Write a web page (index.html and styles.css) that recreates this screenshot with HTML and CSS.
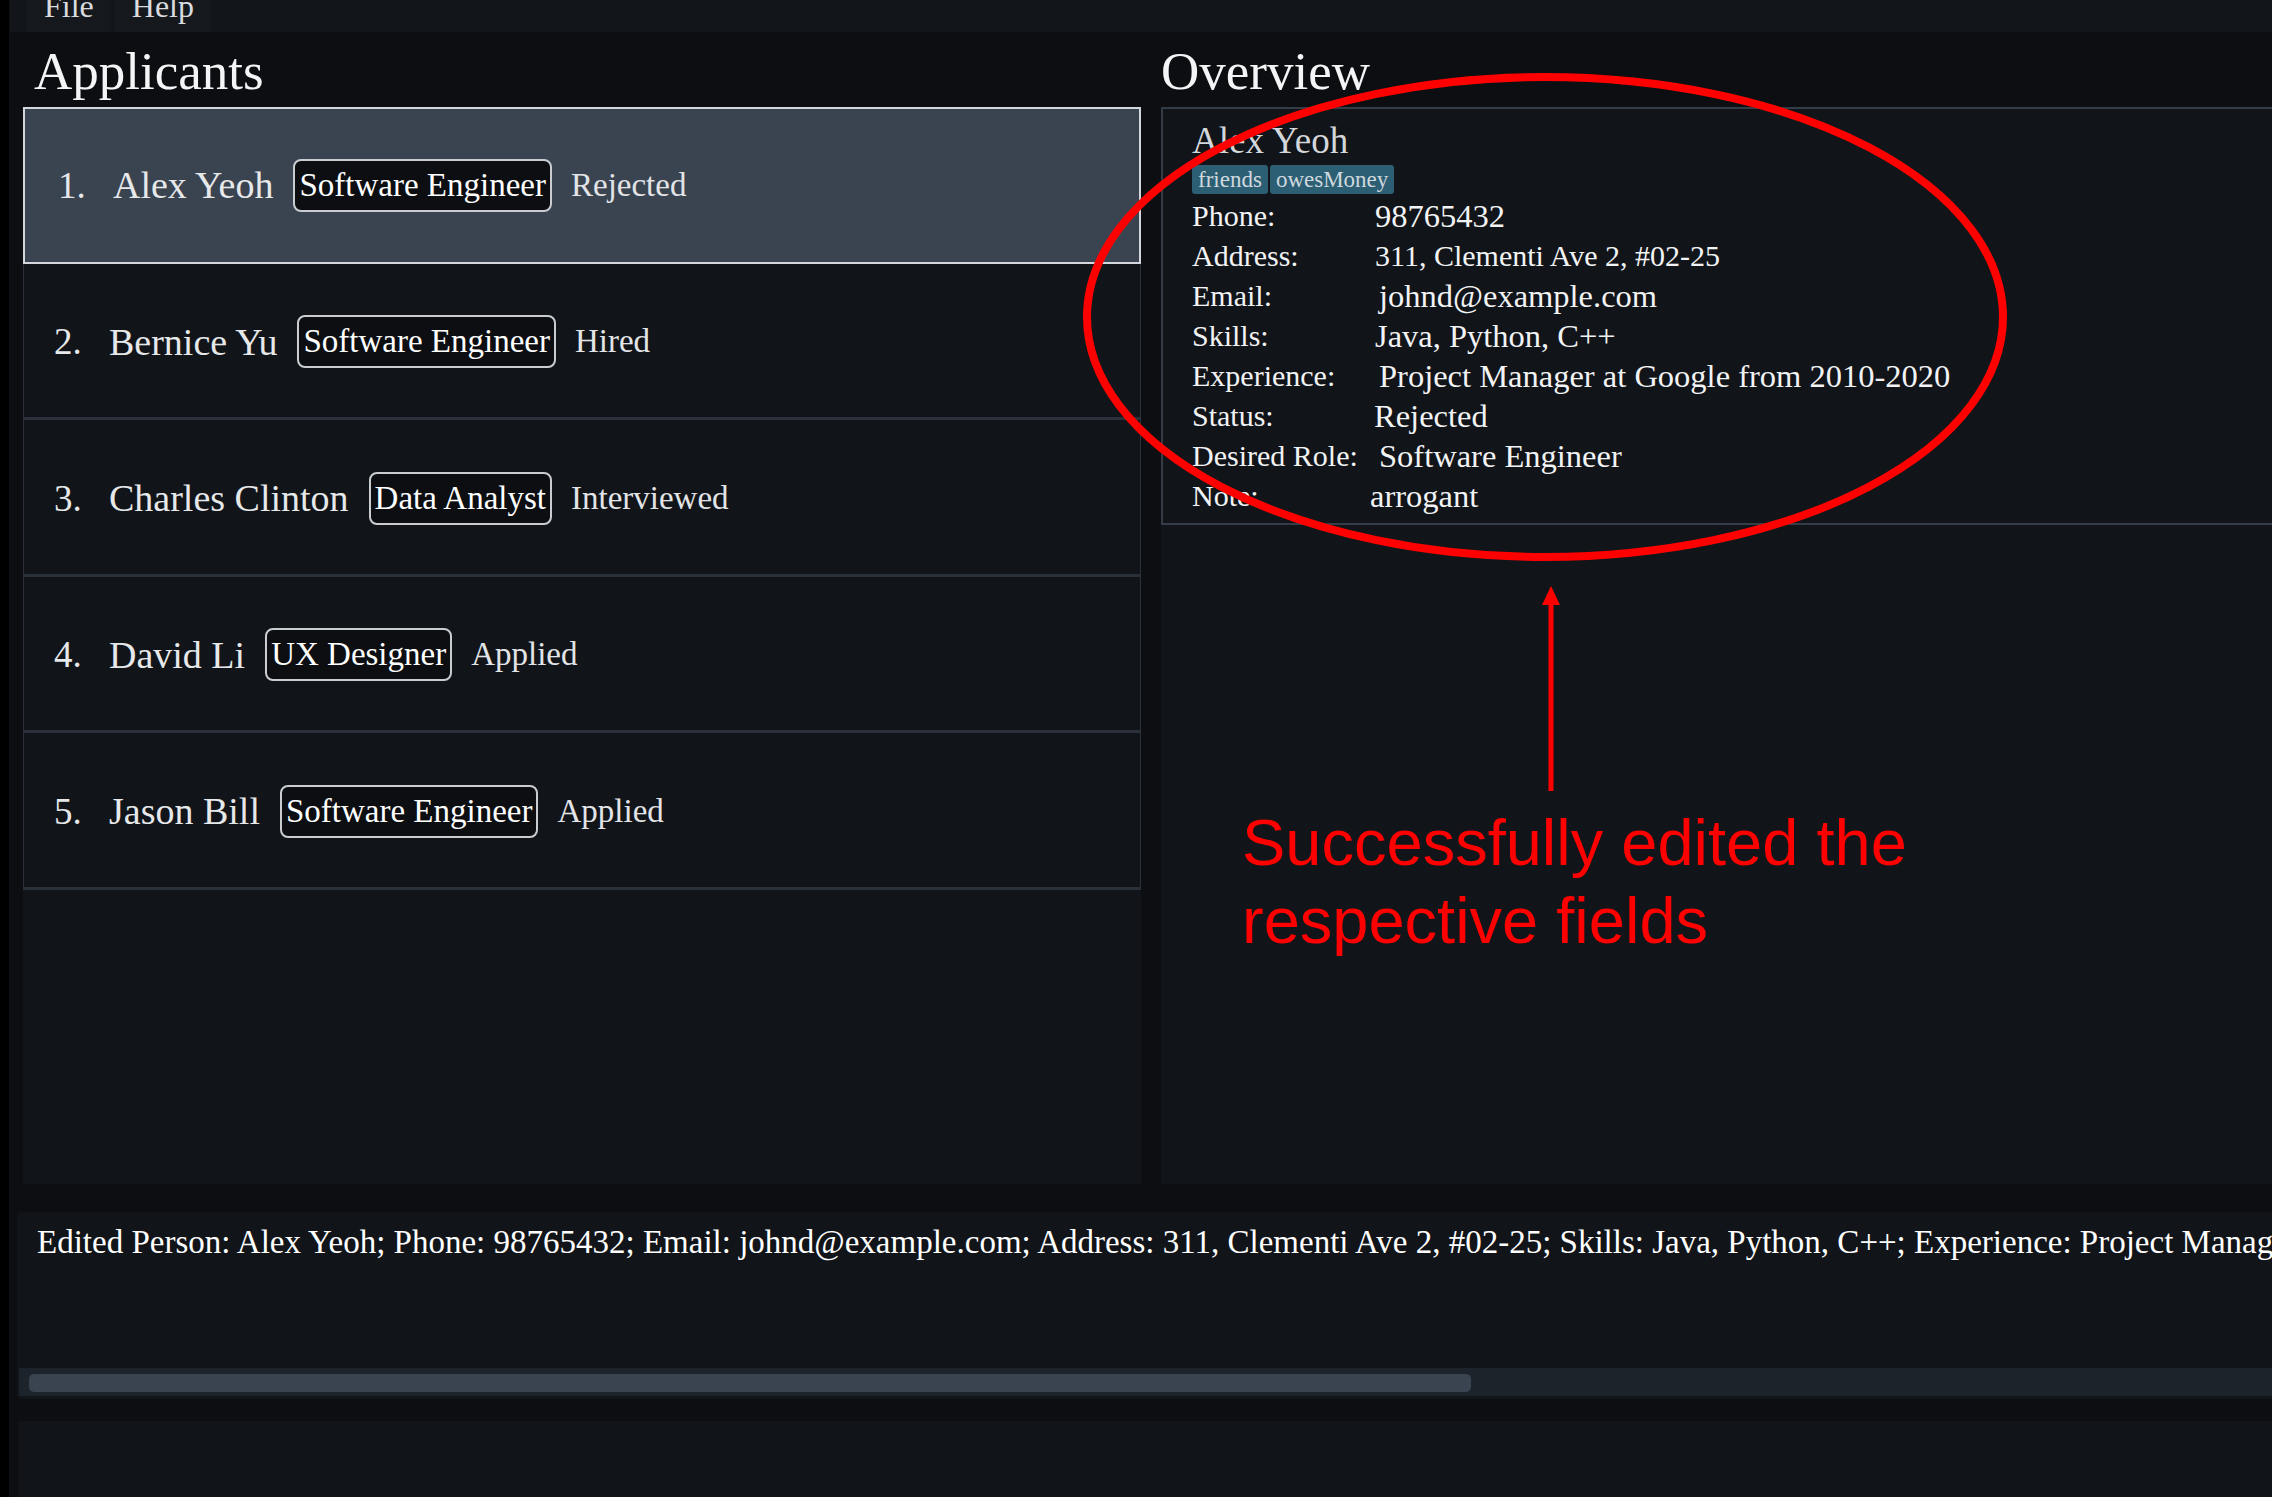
FILE: index.html
```html
<!DOCTYPE html>
<html lang="en">
<head>
<meta charset="utf-8">
<title>Applicants</title>
<link rel="stylesheet" href="styles.css">
</head>
<body>
<div class="edge"></div>
<div class="app">
  <nav class="menubar">
    <span class="menu-item">File</span>
    <span class="menu-item">Help</span>
  </nav>
  <main class="main">
    <section class="col col-list">
      <h1 class="heading">Applicants</h1>
      <div class="panel list">
        <div class="cell selected"><span class="idx">1.</span><span class="name">Alex Yeoh</span><span class="role">Software Engineer</span><span class="status">Rejected</span></div>
        <div class="cell"><span class="idx">2.</span><span class="name">Bernice Yu</span><span class="role">Software Engineer</span><span class="status">Hired</span></div>
        <div class="cell"><span class="idx">3.</span><span class="name">Charles Clinton</span><span class="role">Data Analyst</span><span class="status">Interviewed</span></div>
        <div class="cell"><span class="idx">4.</span><span class="name">David Li</span><span class="role">UX Designer</span><span class="status">Applied</span></div>
        <div class="cell"><span class="idx">5.</span><span class="name">Jason Bill</span><span class="role">Software Engineer</span><span class="status">Applied</span></div>
      </div>
    </section>
    <section class="col col-overview">
      <h1 class="heading heading-overview">Overview</h1>
      <div class="panel overview">
        <div class="card">
          <div class="card-name">Alex Yeoh</div>
          <div class="tags"><span class="tag">friends</span><span class="tag">owesMoney</span></div>
          <dl class="details">
            <dt>Phone:</dt><dd>98765432</dd>
            <dt>Address:</dt><dd class="narrow">311, Clementi Ave 2, #02-25</dd>
            <dt>Email:</dt><dd class="shift-r">johnd@example.com</dd>
            <dt>Skills:</dt><dd>Java, Python, C++</dd>
            <dt>Experience:</dt><dd class="shift-r">Project Manager at Google from 2010-2020</dd>
            <dt>Status:</dt><dd class="shift-l1">Rejected</dd>
            <dt>Desired Role:</dt><dd class="shift-r">Software Engineer</dd>
            <dt>Note:</dt><dd class="shift-l">arrogant</dd>
          </dl>
        </div>
      </div>
    </section>
  </main>
  <div class="result">
    <div class="result-text">Edited Person: Alex Yeoh; Phone: 98765432; Email: johnd@example.com; Address: 311, Clementi Ave 2, #02-25; Skills: Java, Python, C++; Experience: Project Manager at Google from 2010-2020; Status: Rejected; Note: arrogant; Desired Role: Software Engineer; Tags: [friends][owesMoney]</div>
    <div class="scrollbar"><div class="thumb"></div></div>
  </div>
  <div class="statusbar"></div>
</div>

<svg class="annotation" width="2272" height="1497" viewBox="0 0 2272 1497" aria-hidden="true">
  <ellipse cx="1545" cy="317" rx="458" ry="240" fill="none" stroke="#ff0000" stroke-width="8"/>
  <line x1="1551" y1="600" x2="1551" y2="791" stroke="#ff0000" stroke-width="5"/>
  <polygon points="1551,586 1542,605 1560,605" fill="#ff0000"/>
</svg>
<div class="annotation-text">Successfully edited the<br>respective fields</div>
</body>
</html>
```

FILE: styles.css
```css
html, body {
  margin: 0;
  padding: 0;
}

body {
  position: relative;
  width: 2272px;
  height: 1497px;
  overflow: hidden;
  display: flex;
  background: #0c0e12;
  font-family: "Liberation Serif", "DejaVu Serif", serif;
  color: #eceef0;
}

.edge {
  flex: none;
  width: 9px;
  background: #000000;
}

.app {
  flex: 1;
  min-width: 0;
  display: flex;
  flex-direction: column;
}

/* ---------- menu bar ---------- */
.menubar {
  flex: none;
  height: 32px;
  margin-left: 1px;
  padding-left: 17px;
  display: flex;
  gap: 4px;
  background: #12151a;
  overflow: hidden;
}

.menu-item {
  height: 32px;
  padding: 0 17px;
  font-size: 32px;
  line-height: 12px;
  color: #d9dbde;
  background: #15191e;
}

/* ---------- main columns ---------- */
.main {
  flex: none;
  height: 1152px;
  padding-left: 14px;
  display: flex;
  gap: 20px;
}

.col {
  display: flex;
  flex-direction: column;
}

.col-list {
  flex: none;
  width: 1118px;
}

.col-overview {
  flex: 1;
  min-width: 0;
}

.heading {
  flex: none;
  box-sizing: border-box;
  height: 75px;
  margin: 0;
  padding: 3px 0 0 11px;
  font-size: 53px;
  line-height: 72px;
  font-weight: normal;
  color: #f4f5f6;
}

.heading-overview {
  padding-left: 0;
}

.panel {
  flex: 1;
  background: #111419;
}

/* ---------- applicant list ---------- */
.list {
  display: flex;
  flex-direction: column;
}

.cell {
  flex: none;
  box-sizing: border-box;
  height: 156.5px;
  display: flex;
  align-items: center;
  padding: 3px 0 0 30px;
  border: 1px solid #2a313b;
  border-top: none;
  border-bottom-width: 3px;
  color: #e6e8ea;
}

.cell.selected {
  background: #3a4350;
  border: 2px solid #d3d7dc;
  padding: 0 0 0 33px;
}

.idx {
  width: 55px;
  font-size: 37px;
}

.name {
  font-size: 38px;
  margin-right: 20px;
}

.role {
  font-size: 33px;
  line-height: 45px;
  padding: 2px 4px;
  border: 2px solid #c9cdd2;
  border-radius: 8px;
  background: #0c0e12;
  color: #ffffff;
  margin-right: 19px;
}

.status {
  font-size: 33px;
  color: #e2e4e7;
}

/* ---------- overview card ---------- */
.card {
  border: 2px solid #343c47;
  border-right: none;
  padding: 11px 0 7px 29px;
}

.card-name {
  font-size: 37px;
  line-height: 41px;
  color: #d3d7db;
}

.tags {
  margin-top: 4px;
  display: flex;
  gap: 2px;
}

.tag {
  font-size: 23px;
  line-height: 29px;
  padding: 0 6px;
  border-radius: 3px;
  background: #2c5f74;
  color: #cfd8de;
}

.details {
  margin: 2px 0 0;
  display: grid;
  grid-template-columns: 183px auto;
  font-size: 30px;
  line-height: 40px;
  color: #f2f3f4;
}

.details dt,
.details dd {
  margin: 0;
}

.details dd {
  font-size: 32.5px;
}

.details dd.narrow {
  font-size: 30px;
}

.details .shift-r {
  padding-left: 4px;
}

.details .shift-l1 {
  margin-left: -1px;
}

.details .shift-l {
  margin-left: -5px;
}

/* ---------- result display ---------- */
.result {
  flex: none;
  height: 187px;
  margin: 28px 0 0 8px;
  display: flex;
  flex-direction: column;
  background: #111418;
  border-radius: 5px 0 0 5px;
  overflow: hidden;
}

.result-text {
  flex: 1;
  padding: 10px 0 0 20px;
  font-size: 33px;
  line-height: 40px;
  white-space: nowrap;
  overflow: hidden;
  color: #ffffff;
}

.scrollbar {
  flex: none;
  box-sizing: border-box;
  height: 28px;
  margin: 0 0 3px 2px;
  padding: 6px 0 0 10px;
  background: #1d232b;
}

.thumb {
  width: 1442px;
  height: 18px;
  border-radius: 5px;
  background: #3a4350;
}

.statusbar {
  flex: 1;
  margin: 22px 0 0 10px;
  background: #111418;
}

/* ---------- annotation overlay ---------- */
.annotation {
  position: absolute;
  left: 0;
  top: 0;
  pointer-events: none;
}

.annotation-text {
  position: absolute;
  left: 1242px;
  top: 804px;
  font-family: "Liberation Sans", Arial, sans-serif;
  font-size: 65px;
  line-height: 78px;
  color: #ff0000;
  white-space: nowrap;
}
```
